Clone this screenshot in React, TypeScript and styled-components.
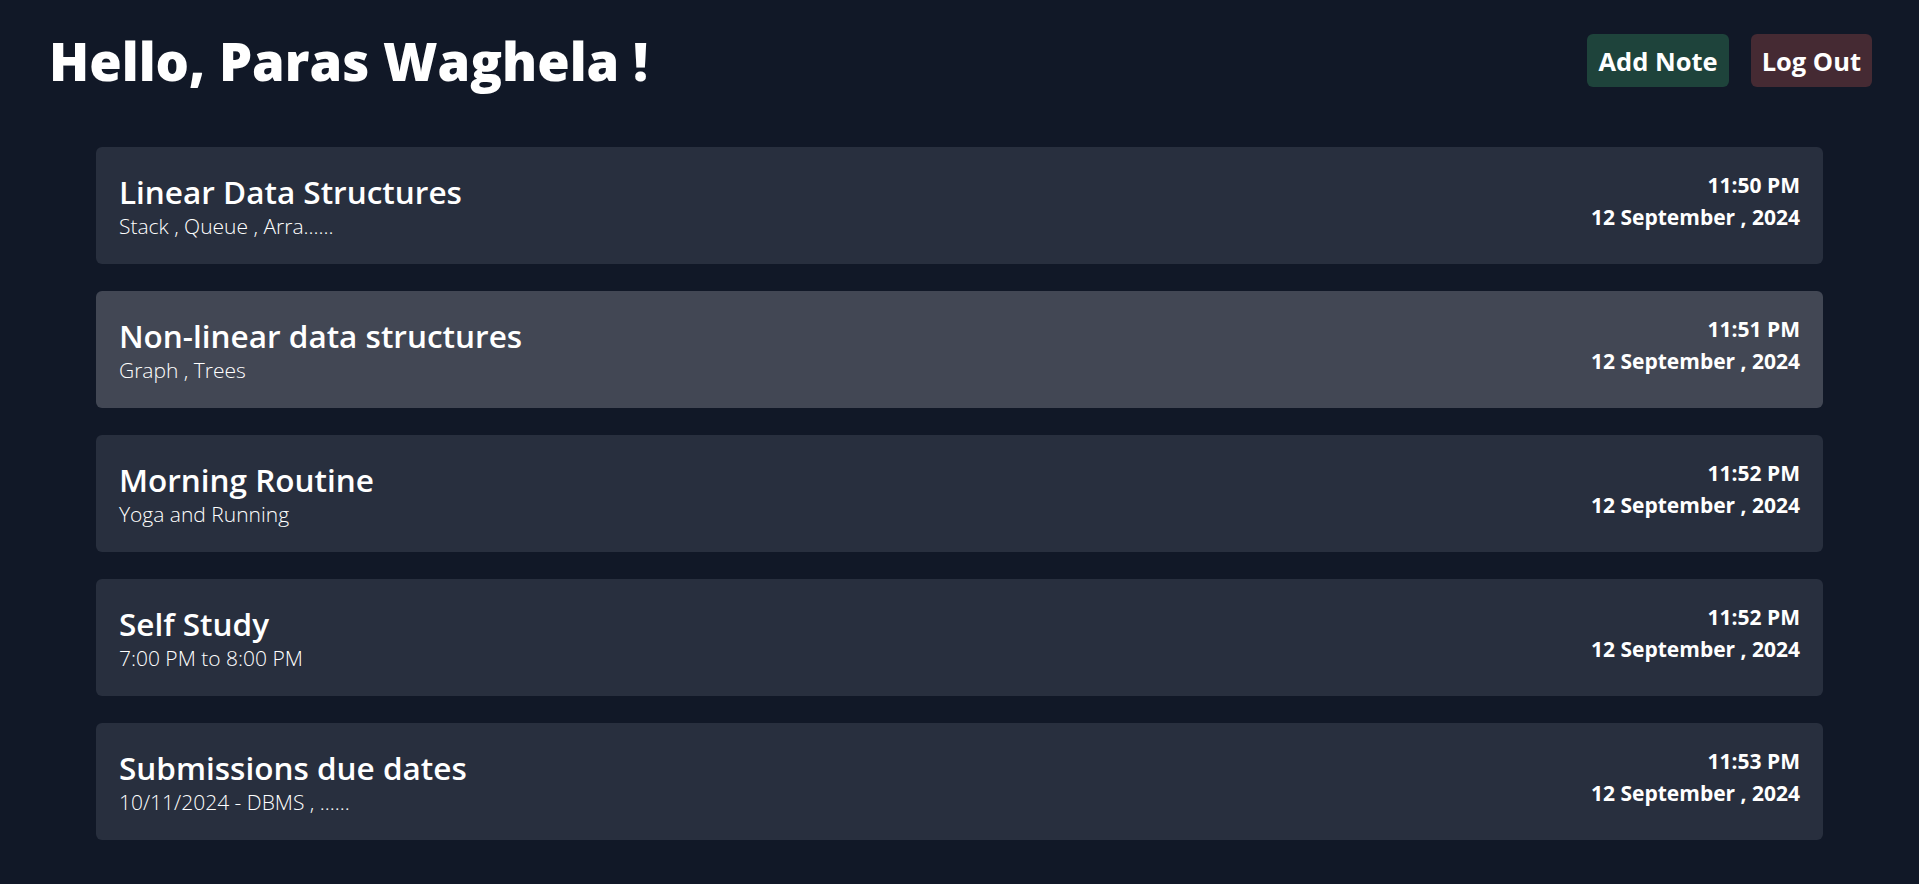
import React from 'react';
import styled, { createGlobalStyle } from 'styled-components';

interface Note {
  id: number;
  title: string;
  body: string;
  time: string;
  date: string;
}

const GlobalStyle = createGlobalStyle`
  html, body {
    margin: 0;
    padding: 0;
    background-color: #111827;
  }

  body {
    font-family: "Open Sans", "Noto Sans", sans-serif;
    color: #ffffff;
  }
`;

const Page = styled.div`
  min-height: 884px;
  background-color: #111827;
  padding-bottom: 40px;
`;

const Header = styled.header`
  display: flex;
  justify-content: space-between;
  align-items: center;
  padding: 34px 47px 0 49px;
  height: 53px;
`;

const Greeting = styled.h1`
  margin: 0;
  font-size: 52.5px;
  font-weight: 800;
  line-height: 1.2;
  color: #ffffff;
`;

const Actions = styled.div`
  display: flex;
  gap: 22px;
`;

const ActionButton = styled.button<{ $tone: 'green' | 'red' }>`
  height: 53px;
  padding: 0 11px;
  border: none;
  border-radius: 6px;
  background-color: ${({ $tone }) => ($tone === 'green' ? '#1e433b' : '#452a33')};
  color: #ffffff;
  font-family: "Open Sans", "Noto Sans", sans-serif;
  font-size: 25.5px;
  font-weight: 700;
  cursor: pointer;
`;

const NotesList = styled.main`
  display: flex;
  flex-direction: column;
  gap: 27px;
  width: 90%;
  margin: 60px auto 0;
`;

const NoteCard = styled.div<{ $active?: boolean }>`
  display: flex;
  justify-content: space-between;
  align-items: center;
  height: 117px;
  box-sizing: border-box;
  padding: 0 23px;
  border-radius: 6px;
  background-color: ${({ $active }) => ($active ? '#424754' : '#282f3e')};
  cursor: pointer;
`;

const NoteText = styled.div`
  display: flex;
  flex-direction: column;
  padding-top: 3px;
`;

const NoteTitle = styled.h3`
  margin: 0;
  font-size: 31.5px;
  font-weight: 600;
  line-height: 1.15;
`;

const NoteBody = styled.p`
  margin: 3px 0 0;
  font-size: 21px;
  font-weight: 300;
  line-height: 1.3;
`;

const NoteMeta = styled.div`
  display: flex;
  flex-direction: column;
  align-items: flex-end;
  font-size: 21px;
  font-weight: 700;
  line-height: 32px;
  margin-bottom: 9px;
`;

const notes: Note[] = [
  { id: 1, title: 'Linear Data Structures', body: 'Stack , Queue , Arra......', time: '11:50 PM', date: '12 September , 2024' },
  { id: 2, title: 'Non-linear data structures', body: 'Graph , Trees', time: '11:51 PM', date: '12 September , 2024' },
  { id: 3, title: 'Morning Routine', body: 'Yoga and Running', time: '11:52 PM', date: '12 September , 2024' },
  { id: 4, title: 'Self Study', body: '7:00 PM to 8:00 PM', time: '11:52 PM', date: '12 September , 2024' },
  { id: 5, title: 'Submissions due dates', body: '10/11/2024 - DBMS , ......', time: '11:53 PM', date: '12 September , 2024' },
];

const App: React.FC = () => {
  return (
    <Page>
      <GlobalStyle />
      <Header>
        <Greeting>Hello, Paras Waghela !</Greeting>
        <Actions>
          <ActionButton $tone="green">Add Note</ActionButton>
          <ActionButton $tone="red">Log Out</ActionButton>
        </Actions>
      </Header>
      <NotesList>
        {notes.map((note) => (
          <NoteCard key={note.id} $active={note.id === 2}>
            <NoteText>
              <NoteTitle>{note.title}</NoteTitle>
              <NoteBody>{note.body}</NoteBody>
            </NoteText>
            <NoteMeta>
              <span>{note.time}</span>
              <span>{note.date}</span>
            </NoteMeta>
          </NoteCard>
        ))}
      </NotesList>
    </Page>
  );
};

export default App;
